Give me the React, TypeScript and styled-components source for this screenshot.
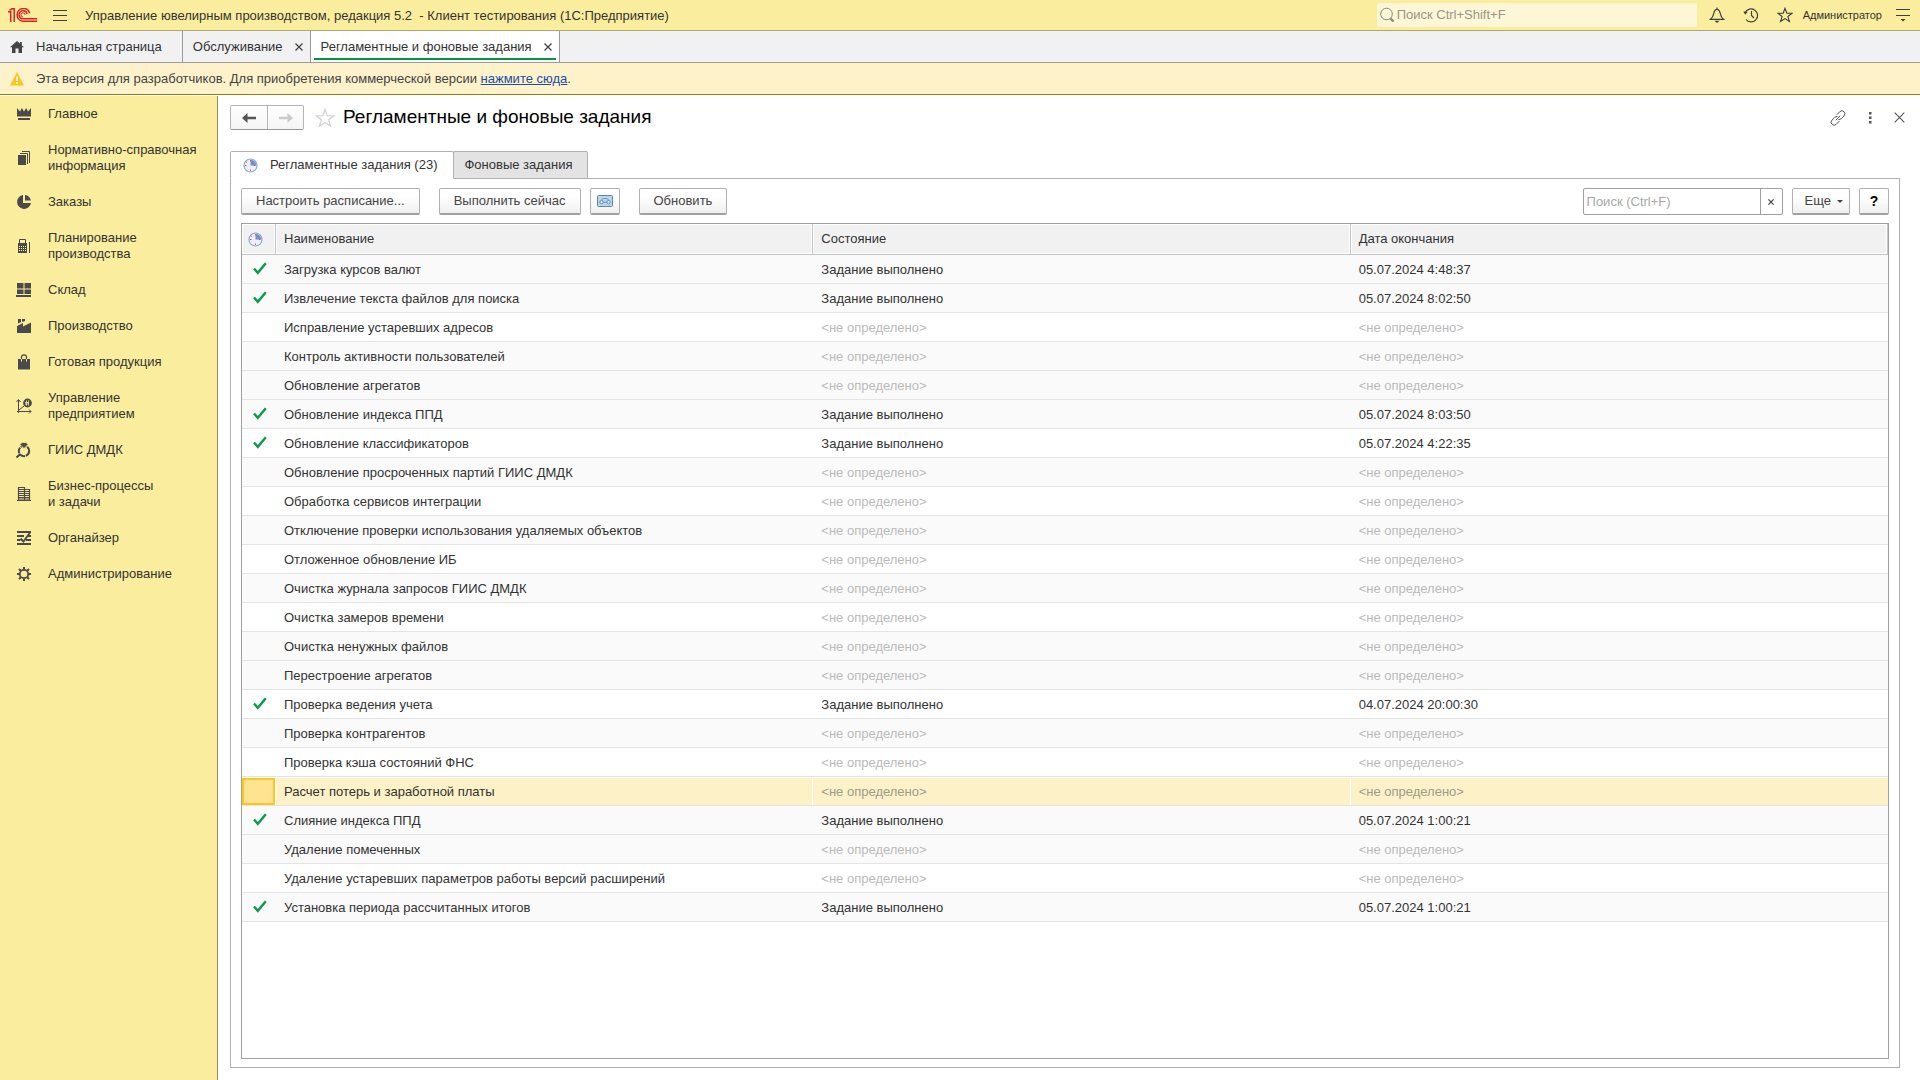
import React from "react";
import styled, { createGlobalStyle, css } from "styled-components";

const GlobalStyle = createGlobalStyle`
  *, *::before, *::after { box-sizing: border-box; }
  body { margin: 0; background: #fff; }
  body, button, input {
    font-family: "Liberation Sans", Arial, sans-serif;
    font-size: 13px;
    line-height: 16px;
    color: #333;
  }
  button { cursor: pointer; }
  svg { display: block; flex: none; }
`;

const Screen = styled.div`
  display: flex;
  flex-direction: column;
  min-height: 100vh;
`;

/* ---------- title bar ---------- */

const TitleBar = styled.header`
  display: flex;
  align-items: center;
  height: 31px;
  padding: 0 10px 0 8px;
  background: #fbed9e;
  border-bottom: 1px solid #b0a96c;
`;

const IconButton = styled.button`
  display: flex;
  align-items: center;
  justify-content: center;
  flex: none;
  padding: 0;
  border: 0;
  background: none;
  color: #3f3f3f;
`;

const MenuButton = styled(IconButton)`
  margin: 0 18px 0 15px;
`;

const AppTitle = styled.h1`
  flex: 1;
  margin: 0;
  padding-top: 2px;
  font-size: 13px;
  font-weight: normal;
  white-space: pre;
`;

const GlobalSearch = styled.label`
  display: flex;
  align-items: center;
  width: 320px;
  height: 24px;
  margin-right: 12px;
  padding-left: 3px;
  gap: 2px;
  border-radius: 2px;
  background: #fdf7d8;
  color: #8b8878;
`;

const BareInput = styled.input`
  flex: 1;
  min-width: 0;
  padding: 0;
  border: 0;
  outline: 0;
  background: none;
  &::placeholder { color: ${(p: { $hint: string }) => p.$hint}; opacity: 1; }
`;

const TitleTools = styled.div`
  display: flex;
  align-items: center;
  gap: 18px;
`;

const UserButton = styled(IconButton)`
  margin: 0 -4px 0 -8px;
  font-size: 11px;
  color: #333;
`;

/* ---------- window tabs ---------- */

const WindowTabs = styled.nav`
  display: flex;
  height: 32px;
  background: #f1f1f1;
  border-bottom: 1px solid #9b9b9b;
`;

const WindowTab = styled.div<{ $active?: boolean }>`
  display: flex;
  align-items: center;
  gap: 12px;
  padding: 0 7px 0 10px;
  border-right: 1px solid #9b9b9b;
  ${(p) =>
    p.$active &&
    css`
      background: linear-gradient(#009646, #009646) center 27px / calc(100% - 6px) 2px no-repeat #fff;
    `}
`;

const HomeTab = styled(WindowTab)`
  padding-right: 20px;
`;

const TabName = styled.button`
  display: flex;
  align-items: center;
  gap: 12px;
  padding: 0;
  border: 0;
  background: none;
`;

/* ---------- notice ---------- */

const Notice = styled.div`
  display: flex;
  align-items: center;
  gap: 12px;
  height: 32px;
  padding: 0 10px;
  background: #fdf2c9;
  border-bottom: 1px solid #927d17;
`;

const NoticeText = styled.p`
  margin: 0;
  color: #444;
  a { color: #1a4ea8; text-decoration: underline; }
`;

/* ---------- body ---------- */

const Body = styled.div`
  display: flex;
  flex: 1;
  padding-top: 1px;
`;

const Sidebar = styled.nav`
  flex: none;
  width: 218px;
  background: #fbed9e;
  border-right: 1px solid #948c5a;
`;

const SectionLink = styled.a`
  display: flex;
  align-items: center;
  gap: 16px;
  padding: 10px 8px 10px 16px;
  color: #333;
  text-decoration: none;
  white-space: pre-line;
  svg { color: #4a4a4a; }
`;

const Main = styled.main`
  display: flex;
  flex: 1;
  flex-direction: column;
  min-width: 0;
  padding: 9px 20px 12px 12px;
`;

const FormHeader = styled.div`
  display: flex;
  align-items: center;
  height: 25px;
`;

const NavButtons = styled.div`
  display: flex;
  border: 1px solid #b5b5b5;
  border-bottom-color: #999;
  border-radius: 2px;
  background: linear-gradient(#fff, #f4f4f4);
`;

const NavButton = styled(IconButton)`
  width: 36px;
  height: 23px;
  color: #555;
  & + & { border-left: 1px solid #b5b5b5; }
  &:disabled { color: #cacaca; }
`;

const FormTitle = styled.h2`
  flex: 1;
  margin: 0 0 0 8px;
  padding-bottom: 2px;
  font-size: 19px;
  line-height: 22px;
  font-weight: normal;
  color: #000;
`;

const FavouriteButton = styled(IconButton)`
  margin-left: 11px;
  color: #d4d4d4;
`;

const FormTools = styled.div`
  display: flex;
  align-items: center;
  gap: 17px;
  margin-right: -5px;
  button { color: #555; }
`;

const PageTabs = styled.div`
  display: flex;
  margin-top: 21px;
`;

const PageTab = styled.button<{ $active?: boolean }>`
  display: flex;
  align-items: center;
  gap: 12px;
  position: relative;
  height: 28px;
  margin-bottom: -1px;
  padding: 0 14px 0 10px;
  border: 1px solid #b0b0b0;
  border-radius: 2px 2px 0 0;
  background: #e3e3e3;
  & + & { margin-left: -1px; }
  ${(p) =>
    p.$active &&
    css`
      padding: 0 16px 0 12px;
      border-bottom-color: #fff;
      background: #fff;
    `}
`;

const Page = styled.section`
  display: flex;
  flex: 1;
  flex-direction: column;
  padding: 9px 10px 8px;
  border: 1px solid #b0b0b0;
`;

const Toolbar = styled.div`
  display: flex;
  gap: 9px;
`;

const Button = styled.button<{ $narrow?: boolean; $spaced?: boolean }>`
  display: flex;
  align-items: center;
  justify-content: center;
  gap: 6px;
  height: 27px;
  padding: 0 ${(p) => (p.$narrow ? 0 : 14)}px;
  ${(p) => p.$narrow && "width: 30px;"}
  ${(p) => p.$spaced && "margin-left: 10px;"}
  border: 1px solid #b0b0b0;
  border-bottom: 2px solid #a0a0a0;
  border-radius: 2px;
  background: linear-gradient(#fff 30%, #f0f0f0);
  color: #444;
`;

const MoreButton = styled(Button)`
  padding: 0 6px 0 12px;
`;

const HelpButton = styled(Button)`
  color: #000;
  font-size: 14px;
  font-weight: bold;
`;

const ListSearch = styled.div`
  display: flex;
  width: 200px;
  height: 27px;
  margin-left: auto;
  padding-left: 3px;
  border: 1px solid #a0a0a0;
  border-radius: 2px;
`;

const ClearButton = styled(IconButton)`
  width: 22px;
  border-left: 1px solid #a0a0a0;
  color: #444;
`;

const ListFrame = styled.div`
  flex: 1;
  margin-top: 8px;
  border: 1px solid #a0a0a0;
`;

const Table = styled.table`
  width: 100%;
  table-layout: fixed;
  border-collapse: separate;
  border-spacing: 0;
`;

const HeadCell = styled.th<{ $mark?: boolean }>`
  height: 31px;
  padding: 0 8px;
  ${(p) => p.$mark && "width: 34px; padding: 0 0 0 6px;"}
  border-right: 1px solid #c4c4c4;
  border-bottom: 1px solid #c4c4c4;
  background: #f1f1f1;
  box-shadow: inset 0 0 0 1px #fff;
  font-weight: normal;
  text-align: left;
`;

const Cell = styled.td<{ $empty?: boolean }>`
  height: 29px;
  padding: 2px 8px 0;
  border-bottom: 1px solid #e4e4e4;
  color: ${(p) => (p.$empty ? "#bababa" : "#333")};
`;

const MarkCell = styled(Cell)`
  padding: 0 0 2px 11px;
`;

const Row = styled.tr<{ $shaded?: boolean; $selected?: boolean }>`
  background: ${(p) => (p.$shaded ? "#fafafa" : "#fff")};
  ${(p) =>
    p.$selected &&
    css`
      background: #fdf1c7;
      ${Cell} {
        box-shadow: inset 0 1px #fff, inset -1px 0 #fff;
        &:last-child { box-shadow: inset 0 1px #fff; }
      }
      ${Cell}:not(:nth-child(2)) { color: #9e9b8c; }
      ${MarkCell} {
        background: #ffe391;
        box-shadow: inset -1px 0 #fff, inset 0 1px #fff, inset -3px -2px #f9c71f, inset 2px 3px #f9c71f;
      }
    `}
`;

/* ---------- icons ---------- */

const Logo = () => (
  <svg width="30" height="14" viewBox="0 0 30 14" fill="none" stroke="#dc2026" strokeWidth="1.5">
    <path d="M0 3.700h2.700V14M1.500 2.300L4 .8h2.200V14" />
    <path d="M21.700 5.200A6.400 6.400 0 1 0 15 13.200h14.200" />
    <path d="M19 6A4 4 0 1 0 15 10.700h14.200" />
    <path d="M17 6.800a2 2 0 1 0-2 2" strokeWidth="1" />
  </svg>
);

const Burger = () => (
  <svg width="14" height="12" viewBox="0 0 14 12" stroke="currentColor">
    <path d="M0 1.500h14M0 6.500h14M0 11.500h14" />
  </svg>
);

const Magnifier = () => (
  <svg width="15" height="16" viewBox="0 0 15 16" fill="none" stroke="currentColor">
    <circle cx="6.500" cy="7" r="5.800" />
    <path d="M10.500 11.500l3 3" strokeWidth="2.400" />
  </svg>
);

const Bell = () => (
  <svg width="16" height="16" viewBox="0 0 16 16" fill="none" stroke="currentColor" strokeWidth="1.200">
    <path d="M8 .5v1.700M1.500 12.300c2.400-1.800 2.700-3 3.200-5.600C5.200 4 6.200 2.300 8 2.300S10.800 4 11.300 6.700c.5 2.600.8 3.800 3.200 5.600z" />
    <path d="M5.500 13.800h5L8 16z" fill="currentColor" stroke="none" />
  </svg>
);

const History = () => (
  <svg width="16" height="16" viewBox="0 0 16 16" fill="none" stroke="currentColor" strokeWidth="1.200">
    <path d="M2.300 5.500A6.500 6.500 0 1 1 3 12.500M8.500 4v4.500l2.500 2.500" />
    <path d="M.3 4.500l4.500.3-2.600 3z" fill="currentColor" stroke="none" />
  </svg>
);

const Star = ({ size = 16 }: { size?: number }) => (
  <svg width={size} height={size} viewBox="0 0 16 16" fill="none" stroke="currentColor" strokeWidth="1.100">
    <path d="M8 1.200l1.800 4.900 5.200.2-4.100 3.200 1.500 5L8 11.600l-4.400 2.900 1.500-5L1 6.300l5.200-.2z" />
  </svg>
);

const PanelMenu = () => (
  <svg width="14" height="14" viewBox="0 0 14 14" stroke="currentColor">
    <path d="M0 1.500h14M0 7.500h14" strokeWidth="1.200" />
    <path d="M4.500 11h5L7 13.500z" fill="currentColor" stroke="none" />
  </svg>
);

const Home = () => (
  <svg width="14" height="12" viewBox="0 0 14 12" fill="#444">
    <path d="M7 0L0 6.200h2V12h3.500V7.500h3V12H12V6.200h2L11.800 4.200V1H10v1.600z" />
  </svg>
);

const Cross = ({ size = 8, width = 1.2 }: { size?: number; width?: number }) => (
  <svg width={size} height={size} viewBox="0 0 8 8" stroke="currentColor" strokeWidth={width}>
    <path d="M.5.5l7 7M7.500.5l-7 7" />
  </svg>
);

const Warning = () => (
  <svg width="14" height="14" viewBox="0 0 14 14">
    <path d="M7 0l7 13.500H0z" fill="#fac71e" />
    <path d="M6.200 4.500h1.600v4.300H6.200zM6.200 10h1.600v1.700H6.200z" fill="#fff" />
  </svg>
);

const Arrow = ({ right }: { right?: boolean }) => (
  <svg width="14" height="10" viewBox="0 0 14 10" fill="currentColor">
    {right ? <path d="M14 5L8.500 0v3.700H0v2.600h8.500V10z" /> : <path d="M0 5l5.500-5v3.700H14v2.600H5.500V10z" />}
  </svg>
);

const Chain = () => (
  <svg width="16" height="16" viewBox="0 0 16 16" fill="none" stroke="currentColor" strokeLinecap="round">
    <path d="M7 4.500l2.800-2.800a2.700 2.700 0 0 1 4.200 4.200L11.200 8.700a2.800 2.800 0 0 1-2.400.8M9 11.500l-2.800 2.800A2.700 2.700 0 0 1 2 10.100l2.800-2.800a2.800 2.800 0 0 1 2.400-.8M6 10l4-4" />
  </svg>
);

const Dots = () => (
  <svg width="14" height="12" viewBox="0 0 14 12" fill="currentColor">
    <path d="M6 0h2.500v2.500H6zM6 4.500h2.500V7H6zM6 9h2.500v2.500H6z" />
  </svg>
);

const Clock = () => (
  <svg width="15" height="15" viewBox="0 0 15 15">
    <circle cx="7.500" cy="7.500" r="6.500" fill="#eaf1fb" stroke="#93a9cc" strokeWidth="1.200" />
    <path d="M7.500 7.500V1.800a5.700 5.700 0 0 1 5.700 5.700z" fill="#6d92ce" />
    <path d="M2 7h1.500v1H2zM7 11.500h1V13H7zM3 3.800h1v1H3zM10.800 7h1.500v1h-1.500zM7 2.200h1v1.300H7z" fill="#f04b4b" />
  </svg>
);

const Cassette = () => (
  <svg width="16" height="12" viewBox="0 0 16 12" fill="none" stroke="#5d86a5">
    <rect x=".5" y=".5" width="15" height="11" rx="1" fill="#b9d8ee" />
    <circle cx="4.500" cy="7.200" r="1.700" fill="#e4f1fa" />
    <circle cx="11.500" cy="7.200" r="1.700" fill="#e4f1fa" />
    <path d="M4.500 5C5 3.800 6 3.500 6.500 3.500h3c.5 0 1.500.3 2 1.500M6.200 7.200h3.600" strokeWidth=".8" />
  </svg>
);

const Caret = () => (
  <svg width="6" height="3" viewBox="0 0 6 3" fill="#444">
    <path d="M0 0h6L3 3z" />
  </svg>
);

const Check = () => (
  <svg width="14" height="13" viewBox="0 0 14 13" fill="none" stroke="#0a9a4b" strokeWidth="2.400">
    <path d="M1 6.500l3.800 4.300L12.800 1.200" />
  </svg>
);

const sectionIcons: Record<string, React.ReactNode> = {
  crown: <path d="M1 2l3 3.500L5.800 2 8 5.500 10.200 2 12 5.500 15 2v8.500H1zM2 12h12v2H2z" fill="currentColor" />,
  copies: (
    <>
      <path d="M2 5h8v10H2z" fill="currentColor" />
      <path d="M4 3.500h7.500V14M6 1.500h7.500V13" fill="none" stroke="currentColor" />
    </>
  ),
  pie: <path d="M7 1a7 7 0 1 0 8 8H7zM9 1v5.500h5.800A7 7 0 0 0 9 1z" fill="currentColor" />,
  register: (
    <>
      <path d="M2 6h9v9H2z" fill="currentColor" />
      <path d="M3.500 6V1.500h6V6M2 5.500h9M13.500 4v11" fill="none" stroke="currentColor" />
      <path d="M3 8.500h7M3 10.500h7M3 12.500h7" stroke="#fbed9e" strokeDasharray="1 1" />
    </>
  ),
  boxes: <path d="M1 1h6.500v5.500H1zM8.500 1H15v5.500H8.500zM1 7.500h6.500v4.500H1zM8.500 7.500H15v4.500H8.500zM0 13h15v2H0z" fill="currentColor" />,
  factory: <path d="M2 1h3v3L2 5.500zM6 1h3v2L6 4zM1 15V8l6-3v3.500L15 4.500V15z" fill="currentColor" />,
  bag: (
    <>
      <path d="M2 5h12v10.500H2z" fill="currentColor" />
      <path d="M5.500 5V3.500c0-3.400 5-3.400 5 0V5" fill="none" stroke="currentColor" strokeWidth="1.200" />
      <path d="M5.500 5v2.500M10.500 5v2.500" stroke="#fbed9e" />
    </>
  ),
  chart: (
    <>
      <path d="M2.500 15V2M.5 4l2-2.500 2 2.500M1 13.500h14M13 11.500l2 2-2 2M3 12l5-4" fill="none" stroke="currentColor" />
      <circle cx="11.500" cy="5" r="4.400" fill="currentColor" />
      <path d="M10.500 2.500v5M12.500 2.500v5M9 4.500h3M9 6h3" stroke="#fbed9e" strokeWidth=".8" />
    </>
  ),
  ring: (
    <>
      <circle cx="8" cy="9" r="5.200" fill="none" stroke="currentColor" strokeWidth="2" strokeDasharray="6 .8" />
      <path d="M4 2.500L6 .5h4l2 2L8 6.500z" fill="currentColor" stroke="#fbed9e" strokeWidth=".7" />
      <path d="M4.500 12L.5 15.500" stroke="currentColor" strokeWidth="2" />
    </>
  ),
  buildings: (
    <>
      <path d="M2.500 14V1.500h6V14M8.500 3.500h5V14M1 14.500h14" fill="none" stroke="currentColor" strokeWidth="1.200" />
      <path d="M3 3.500h5.500M3 5.500h10M3 7.500h10M3 9.500h10M3 11.500h10M3 13h10" stroke="currentColor" />
    </>
  ),
  organizer: (
    <>
      <path d="M1 2h14M1 6h7M12 6h3M1 10h3.500M10 10h5M1 14h14" stroke="currentColor" strokeWidth="2" />
      <path d="M14 2.500L7.500 11.500 4.500 8.500" fill="none" stroke="currentColor" strokeWidth="1.800" />
    </>
  ),
  gear: (
    <>
      <circle cx="8" cy="8" r="4.200" fill="none" stroke="currentColor" strokeWidth="1.800" />
      <path
        d="M8 1v2.500M8 12.500V15M1 8h2.500M12.500 8H15M3 3l2 2M11 11l2 2M13 3l-2 2M5 11l-2 2"
        stroke="currentColor"
        strokeWidth="2"
      />
    </>
  ),
};

const SectionIcon = ({ name }: { name: string }) => (
  <svg width="16" height="16" viewBox="0 0 16 16">{sectionIcons[name]}</svg>
);

/* ---------- data ---------- */

const sections = [
  { icon: "crown", label: "Главное" },
  { icon: "copies", label: "Нормативно-справочная\nинформация" },
  { icon: "pie", label: "Заказы" },
  { icon: "register", label: "Планирование\nпроизводства" },
  { icon: "boxes", label: "Склад" },
  { icon: "factory", label: "Производство" },
  { icon: "bag", label: "Готовая продукция" },
  { icon: "chart", label: "Управление\nпредприятием" },
  { icon: "ring", label: "ГИИС ДМДК" },
  { icon: "buildings", label: "Бизнес-процессы\nи задачи" },
  { icon: "organizer", label: "Органайзер" },
  { icon: "gear", label: "Администрирование" },
];

type Job = { name: string; finished?: string; shaded?: boolean; selected?: boolean };

const jobs: Job[] = [
  { name: "Загрузка курсов валют", finished: "05.07.2024 4:48:37", shaded: true },
  { name: "Извлечение текста файлов для поиска", finished: "05.07.2024 8:02:50", shaded: true },
  { name: "Исправление устаревших адресов" },
  { name: "Контроль активности пользователей", shaded: true },
  { name: "Обновление агрегатов", shaded: true },
  { name: "Обновление индекса ППД", finished: "05.07.2024 8:03:50", shaded: true },
  { name: "Обновление классификаторов", finished: "05.07.2024 4:22:35" },
  { name: "Обновление просроченных партий ГИИС ДМДК", shaded: true },
  { name: "Обработка сервисов интеграции" },
  { name: "Отключение проверки использования удаляемых объектов", shaded: true },
  { name: "Отложенное обновление ИБ" },
  { name: "Очистка журнала запросов ГИИС ДМДК", shaded: true },
  { name: "Очистка замеров времени" },
  { name: "Очистка ненужных файлов", shaded: true },
  { name: "Перестроение агрегатов", shaded: true },
  { name: "Проверка ведения учета", finished: "04.07.2024 20:00:30" },
  { name: "Проверка контрагентов", shaded: true },
  { name: "Проверка кэша состояний ФНС" },
  { name: "Расчет потерь и заработной платы", selected: true },
  { name: "Слияние индекса ППД", finished: "05.07.2024 1:00:21", shaded: true },
  { name: "Удаление помеченных", shaded: true },
  { name: "Удаление устаревших параметров работы версий расширений" },
  { name: "Установка периода рассчитанных итогов", finished: "05.07.2024 1:00:21", shaded: true },
];

const undefinedValue = "<не определено>";

/* ---------- page ---------- */

export default function App() {
  return (
    <Screen>
      <GlobalStyle />
      <TitleBar>
        <Logo />
        <MenuButton aria-label="Меню"><Burger /></MenuButton>
        <AppTitle>{"Управление ювелирным производством, редакция 5.2  - Клиент тестирования (1С:Предприятие)"}</AppTitle>
        <GlobalSearch>
          <Magnifier />
          <BareInput $hint="#9a9684" placeholder="Поиск Ctrl+Shift+F" aria-label="Поиск" />
        </GlobalSearch>
        <TitleTools>
          <IconButton aria-label="Уведомления"><Bell /></IconButton>
          <IconButton aria-label="История"><History /></IconButton>
          <IconButton aria-label="Избранное"><Star /></IconButton>
          <UserButton>Администратор</UserButton>
          <IconButton aria-label="Настройки"><PanelMenu /></IconButton>
        </TitleTools>
      </TitleBar>

      <WindowTabs aria-label="Окна">
        <HomeTab><TabName><Home />Начальная страница</TabName></HomeTab>
        <WindowTab>
          <TabName>Обслуживание</TabName>
          <IconButton aria-label="Закрыть"><Cross /></IconButton>
        </WindowTab>
        <WindowTab $active>
          <TabName>Регламентные и фоновые задания</TabName>
          <IconButton aria-label="Закрыть"><Cross /></IconButton>
        </WindowTab>
      </WindowTabs>

      <Notice>
        <Warning />
        <NoticeText>
          Эта версия для разработчиков. Для приобретения коммерческой версии <a href="#buy">нажмите сюда</a>.
        </NoticeText>
      </Notice>

      <Body>
        <Sidebar aria-label="Разделы">
          {sections.map((s) => (
            <SectionLink key={s.icon} href={`#${s.icon}`}>
              <SectionIcon name={s.icon} />
              {s.label}
            </SectionLink>
          ))}
        </Sidebar>

        <Main>
          <FormHeader>
            <NavButtons>
              <NavButton aria-label="Назад"><Arrow /></NavButton>
              <NavButton aria-label="Вперед" disabled><Arrow right /></NavButton>
            </NavButtons>
            <FavouriteButton aria-label="В избранное"><Star size={20} /></FavouriteButton>
            <FormTitle>Регламентные и фоновые задания</FormTitle>
            <FormTools>
              <IconButton aria-label="Ссылка"><Chain /></IconButton>
              <IconButton aria-label="Дополнительно"><Dots /></IconButton>
              <IconButton aria-label="Закрыть"><Cross size={11} width={0.8} /></IconButton>
            </FormTools>
          </FormHeader>

          <PageTabs role="tablist">
            <PageTab role="tab" aria-selected $active><Clock />Регламентные задания (23)</PageTab>
            <PageTab role="tab" aria-selected={false}>Фоновые задания</PageTab>
          </PageTabs>

          <Page>
            <Toolbar>
              <Button>Настроить расписание...</Button>
              <Button $spaced>Выполнить сейчас</Button>
              <Button $narrow aria-label="Журнал"><Cassette /></Button>
              <Button $spaced>Обновить</Button>
              <ListSearch>
                <BareInput $hint="#a8a8a8" placeholder="Поиск (Ctrl+F)" aria-label="Поиск в списке" />
                <ClearButton aria-label="Очистить"><Cross size={6} width={1.6} /></ClearButton>
              </ListSearch>
              <MoreButton>Еще <Caret /></MoreButton>
              <HelpButton $narrow>?</HelpButton>
            </Toolbar>

            <ListFrame>
              <Table>
                <thead>
                  <tr>
                    <HeadCell $mark aria-label="Выполнено"><Clock /></HeadCell>
                    <HeadCell>Наименование</HeadCell>
                    <HeadCell>Состояние</HeadCell>
                    <HeadCell>Дата окончания</HeadCell>
                  </tr>
                </thead>
                <tbody>
                  {jobs.map((job) => (
                    <Row key={job.name} $shaded={job.shaded} $selected={job.selected}>
                      <MarkCell>{job.finished && <Check />}</MarkCell>
                      <Cell>{job.name}</Cell>
                      <Cell $empty={!job.finished}>{job.finished ? "Задание выполнено" : undefinedValue}</Cell>
                      <Cell $empty={!job.finished}>{job.finished ?? undefinedValue}</Cell>
                    </Row>
                  ))}
                </tbody>
              </Table>
            </ListFrame>
          </Page>
        </Main>
      </Body>
    </Screen>
  );
}
